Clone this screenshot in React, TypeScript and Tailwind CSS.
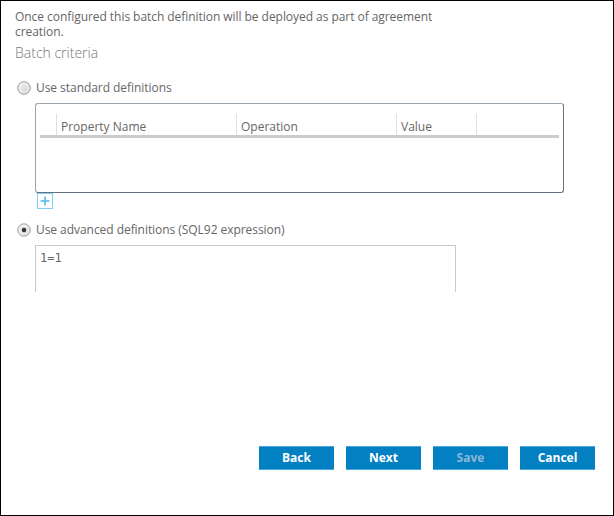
import React from "react";

function Radio({ checked }: { checked?: boolean }) {
  return (
    <svg width="14" height="14" viewBox="0 0 14 14" className="shrink-0">
      <defs>
        <linearGradient id={checked ? "rg1" : "rg0"} x1="0" y1="0" x2="1" y2="1">
          <stop offset="0" stopColor="#f2f2f2" />
          <stop offset="1" stopColor="#d2d2d2" />
        </linearGradient>
      </defs>
      <circle cx="7" cy="7" r="6.2" fill={`url(#${checked ? "rg1" : "rg0"})`} stroke="#939393" strokeWidth="0.9" />
      <circle cx="7" cy="7" r="4.6" fill="none" stroke="#ffffff" strokeOpacity="0.8" strokeWidth="0.8" />
      {checked && <circle cx="7" cy="7" r="2.2" fill="#333" />}
    </svg>
  );
}

function Btn({ label, disabled }: { label: string; disabled?: boolean }) {
  return (
    <button
      className={`w-[75px] h-[24px] bg-[#0380c2] border-t border-b border-[#4aa6de] text-[12px] font-bold leading-none ${
        disabled ? "text-[#8bb6d6]" : "text-white"
      }`}
    >
      {label}
    </button>
  );
}

export default function App() {
  return (
    <div
      className="w-[614px] h-[516px] border border-black bg-white flex flex-col text-[#666]"
      style={{ fontFamily: '"Open Sans", "Liberation Sans", sans-serif' }}
    >
      <div className="pl-[14px] pt-[8px] flex flex-col">
        <p className="w-[440px] text-[12px] leading-[15px] tracking-[-0.05px]">
          Once configured this batch definition will be deployed as part of agreement creation.
        </p>
        <div className="mt-[5px] text-[14px] leading-[18px] font-light text-[#777]">Batch criteria</div>

        <div className="mt-[18px] flex items-center gap-[5px] h-[16px] pl-[2px]">
          <Radio />
          <span className="text-[12px] tracking-[-0.05px]">Use standard definitions</span>
        </div>

        <div className="ml-[20px] mt-[7px] w-[529px] h-[90px] border border-[#9aa5ae] border-b-[#66737e] border-r-[#66737e] rounded-[3px] px-[4px] pt-[10px]">
          <div className="flex h-[21px] border-b-[3px] border-[#cccccc] box-content">
            <div className="w-[17px] border-r border-[#e0e0e0]" />
            <div className="w-[180px] border-r border-[#e0e0e0] pl-[4px] pt-[2px] text-[12px] leading-[21px]">Property Name</div>
            <div className="w-[160px] border-r border-[#e0e0e0] pl-[4px] pt-[2px] text-[12px] leading-[21px]">Operation</div>
            <div className="w-[80px] border-r border-[#e0e0e0] pl-[4px] pt-[2px] text-[12px] leading-[21px]">Value</div>
            <div className="flex-1" />
          </div>
        </div>

        <div className="ml-[22px] w-[16px] h-[16px] border-[1.5px] border-[#7fd0f4] flex items-center justify-center">
          <svg width="10" height="10" viewBox="0 0 10 10">
            <path d="M5 0.5V9.5M0.5 5H9.5" stroke="#4fbbee" strokeWidth="1.6" />
          </svg>
        </div>

        <div className="mt-[13px] flex items-center gap-[5px] h-[16px] pl-[2px]">
          <Radio checked />
          <span className="text-[12px] tracking-[-0.05px]">Use advanced definitions (SQL92 expression)</span>
        </div>

        <div className="ml-[20px] mt-[7px] w-[421px] h-[47px] border-t border-l border-r border-[#c8c8c8] pl-[4px] pt-[4px]">
          <div className="text-[12px] leading-[16px]" style={{ fontFamily: '"DejaVu Sans Mono", monospace' }}>
            1=1
          </div>
        </div>
      </div>

      <div className="mt-auto mb-[45px] flex justify-end gap-[12px] pr-[18px]">
        <Btn label="Back" />
        <Btn label="Next" />
        <Btn label="Save" disabled />
        <Btn label="Cancel" />
      </div>
    </div>
  );
}
